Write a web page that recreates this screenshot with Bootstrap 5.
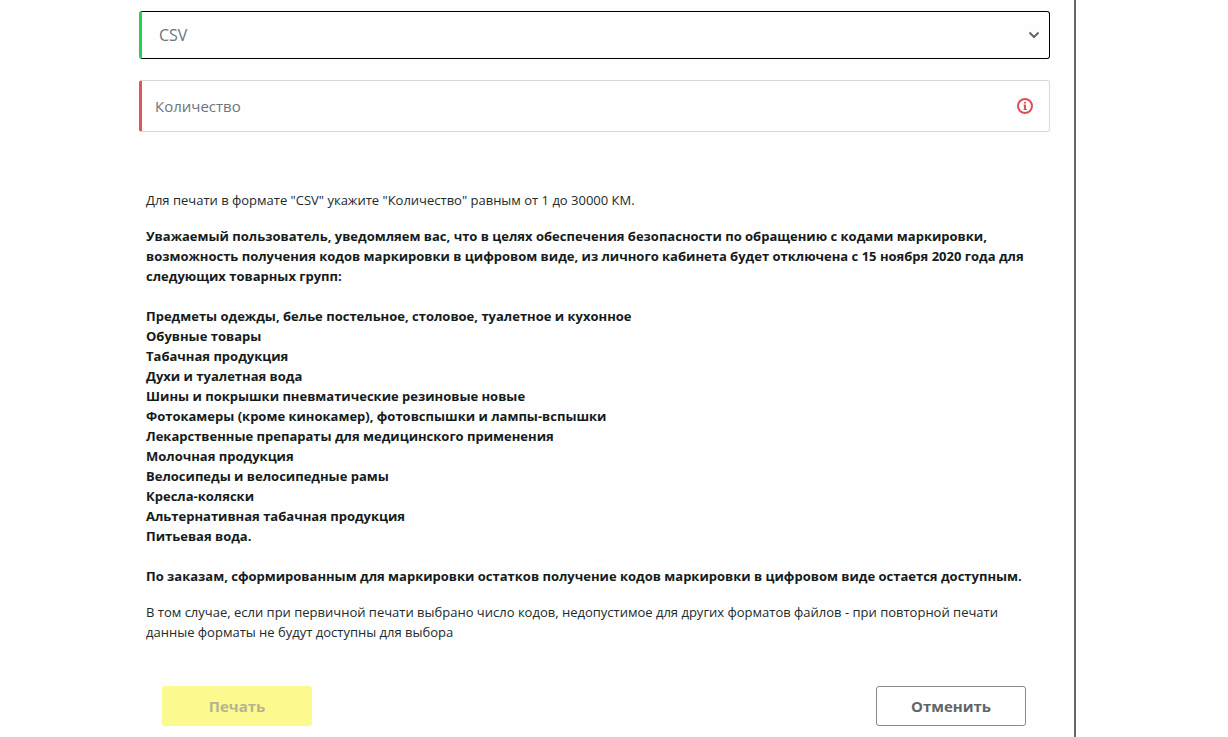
<!DOCTYPE html>
<html lang="ru">
<head>
<meta charset="utf-8">
<meta name="viewport" content="width=device-width, initial-scale=1">
<title>Печать кодов маркировки</title>
<link rel="stylesheet" href="https://cdn.jsdelivr.net/npm/bootstrap@5.3.0/dist/css/bootstrap.min.css">
<style>
body { font-family: "Open Sans", "Noto Sans", sans-serif; background: #fefefe; color: #212b2b; }
.print-dialog { margin: 0 152px 0 114px; padding: 11px 24px 11px 25px; border-right: 2px solid #666; }
.field { border-radius: 3px; color: #6c757d; font-size: 15px; background-color: #fefefe; }
.field::placeholder { color: #6c757d; opacity: 1; }
.field-format { height: 48px; padding: 0 40px 0 17px; border: 1px solid #000; border-left: 3px solid #24d053; font-size: 16px;
  background-image: url("data:image/svg+xml,%3csvg xmlns='http://www.w3.org/2000/svg' viewBox='0 0 12 12'%3e%3cpath d='M1.500 3.500l4.500 4.500 4.500-4.500' fill='none' stroke='%23666' stroke-width='2'/%3e%3c/svg%3e");
  background-position: right 9px center; background-size: 12px 12px; }
.field-count { height: 52px; padding: 0 48px 0 13px; border: 1px solid #d8d8d8; border-left: 3px solid #e15759; }
.field-block { margin-bottom: 21px; }
.info-icon { right: 16px; }
.notice { padding: 0 7px; margin-top: 58px; font-size: 13px; line-height: 20px; }
.notice p { margin-bottom: 16px; }
.notice .strong-text { font-weight: 700; color: #141b1b; }
.notice ul { margin: 20px 0; }
.actions { padding: 0 24px 0 23px; margin-top: 44px; }
.action { width: 150px; height: 40px; border-radius: 3px; font-size: 15px; font-weight: 700; padding: 0; }
.action-print, .action-print:disabled { background: #fcf98e; border-color: #fcf98e; color: #b5b391; opacity: 1; }
.action-cancel { background: #fefefe; border: 1px solid #888; color: #5e6666; }
</style>
</head>
<body>
<main class="print-dialog min-vh-100">
  <form>
    <div class="field-block">
      <select class="form-select field field-format" aria-label="Формат">
        <option>CSV</option>
      </select>
    </div>
    <div class="position-relative">
      <input type="text" class="form-control field field-count" placeholder="Количество" aria-label="Количество">
      <svg class="info-icon position-absolute top-50 translate-middle-y" width="18" height="18" viewBox="0 0 18 18" aria-hidden="true">
        <circle cx="9" cy="9" r="7" fill="none" stroke="#de5055" stroke-width="2"/>
        <path d="M8 5h2v1.500H8zM7.500 7.500H10v4.500h1v1H7.500v-1H8V8.500h-.5z" fill="#de5055"/>
      </svg>
    </div>
    <div class="notice">
      <p>Для печати в формате "CSV" укажите "Количество" равным от 1 до 30000 КМ.</p>
      <div class="strong-text">
        <div>Уважаемый пользователь, уведомляем вас, что в целях обеспечения безопасности по обращению с кодами маркировки, возможность получения кодов маркировки в цифровом виде, из личного кабинета будет отключена с 15 ноября 2020 года для следующих товарных групп:</div>
        <ul class="list-unstyled">
          <li>Предметы одежды, белье постельное, столовое, туалетное и кухонное</li>
          <li>Обувные товары</li>
          <li>Табачная продукция</li>
          <li>Духи и туалетная вода</li>
          <li>Шины и покрышки пневматические резиновые новые</li>
          <li>Фотокамеры (кроме кинокамер), фотовспышки и лампы-вспышки</li>
          <li>Лекарственные препараты для медицинского применения</li>
          <li>Молочная продукция</li>
          <li>Велосипеды и велосипедные рамы</li>
          <li>Кресла-коляски</li>
          <li>Альтернативная табачная продукция</li>
          <li>Питьевая вода.</li>
        </ul>
        <p>По заказам, сформированным для маркировки остатков получение кодов маркировки в цифровом виде остается доступным.</p>
      </div>
      <p class="mb-0">В том случае, если при первичной печати выбрано число кодов, недопустимое для других форматов файлов - при повторной печати данные форматы не будут доступны для выбора</p>
    </div>
    <div class="actions d-flex justify-content-between">
      <button type="submit" class="btn action action-print" disabled>Печать</button>
      <button type="button" class="btn action action-cancel">Отменить</button>
    </div>
  </form>
</main>
<script src="https://cdn.jsdelivr.net/npm/bootstrap@5.3.0/dist/js/bootstrap.bundle.min.js"></script>
</body>
</html>
